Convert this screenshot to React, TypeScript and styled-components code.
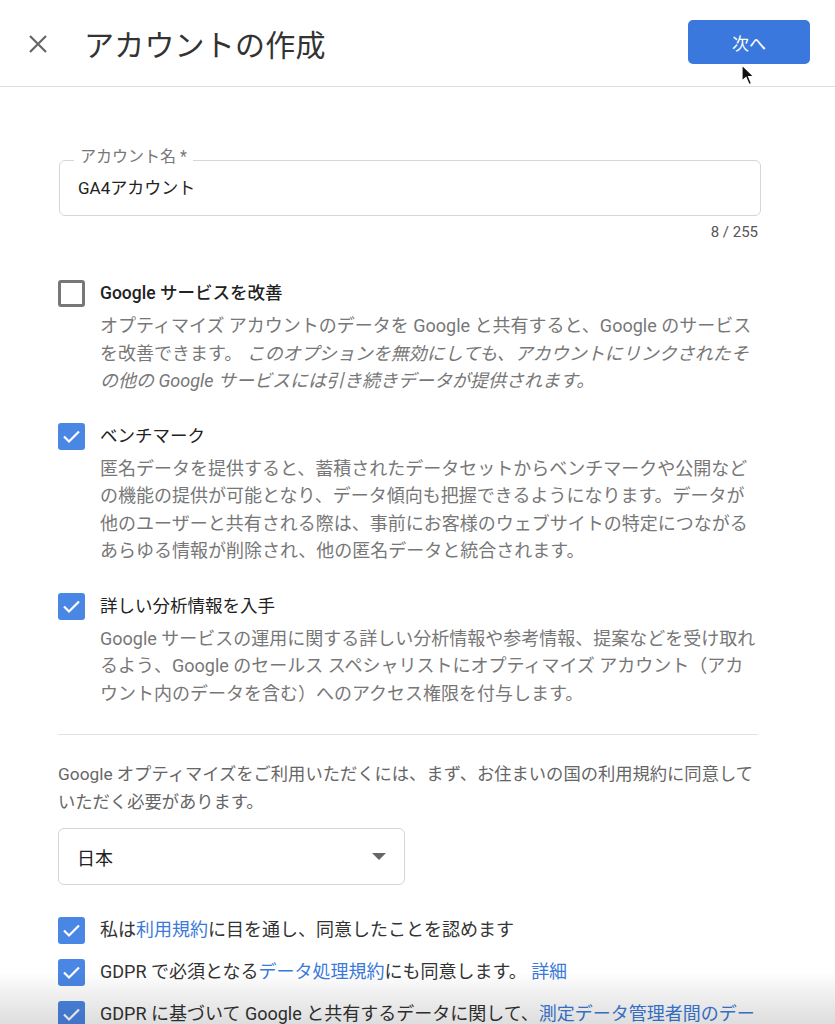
import styled, { createGlobalStyle } from 'styled-components';

const GlobalStyle = createGlobalStyle`
  html, body {
    margin: 0;
    padding: 0;
    background: #ffffff;
  }
  body {
    font-family: Roboto, "Noto Sans CJK JP", "Noto Sans", sans-serif;
    color: #202124;
  }
`;

const Page = styled.div`
  width: 835px;
  min-height: 1024px;
  overflow: hidden;
  position: relative;
`;

const Header = styled.header`
  height: 86px;
  display: flex;
  align-items: center;
  border-bottom: 1px solid #dcdcdc;
  padding: 0 25px 0 27px;
  position: relative;
`;

const CloseButton = styled.button`
  width: 22px;
  height: 22px;
  padding: 0;
  border: none;
  background: none;
  display: flex;
  align-items: center;
  justify-content: center;
  margin-right: 35px;
  margin-top: 1px;
`;

const Title = styled.h1`
  margin: 0;
  font-size: 30px;
  font-weight: 400;
  color: #333333;
  letter-spacing: 0.2px;
  flex: 1;
`;

const NextButton = styled.button`
  width: 122px;
  height: 44px;
  border: none;
  border-radius: 5px;
  background: #3a78dd;
  color: #ffffff;
  font-family: inherit;
  font-size: 17px;
  margin-top: -2px;
`;

const Cursor = styled.svg`
  position: absolute;
  left: 741px;
  top: 64px;
`;

const Content = styled.main`
  margin-left: 58px;
  width: 703px;
  padding-top: 73px;
`;

const Field = styled.div`
  position: relative;
  height: 56px;
  border: 1px solid #d6d6d6;
  border-radius: 6px;
  display: flex;
  align-items: center;
  padding: 0 18px;
  margin-left: 1px;
  box-sizing: border-box;
`;

const FloatLabel = styled.span`
  position: absolute;
  left: 14px;
  top: -16px;
  padding: 0 6px;
  background: #ffffff;
  font-size: 16px;
  line-height: 24px;
  color: #777777;
`;

const FieldValue = styled.span`
  font-size: 17px;
  color: #222222;
  margin-top: -3px;
`;

const Counter = styled.div`
  text-align: right;
  font-size: 15px;
  line-height: 20px;
  color: #555555;
  margin-top: 6px;
  padding-right: 3px;
`;

const OptionList = styled.div`
  display: flex;
  flex-direction: column;
  gap: 27px;
  margin-top: 37px;
`;

const Option = styled.div`
  display: grid;
  grid-template-columns: 27px 1fr;
  column-gap: 15px;
`;

const Box = styled.span<{ $checked: boolean }>`
  width: 27px;
  height: 27px;
  box-sizing: border-box;
  border-radius: 3px;
  display: flex;
  align-items: center;
  justify-content: center;
  margin-top: 1px;
  background: ${({ $checked }) => ($checked ? '#4a86e4' : '#ffffff')};
  border: ${({ $checked }) => ($checked ? 'none' : '3px solid #777777')};
`;

const OptionTitle = styled.div<{ $bold?: boolean }>`
  font-size: 17.5px;
  line-height: 28px;
  color: #222222;
  font-weight: ${({ $bold }) => ($bold ? 500 : 400)};
`;

const OptionText = styled.p`
  grid-column: 2;
  margin: 5px 0 0;
  padding-right: 5px;
  font-size: 18px;
  line-height: 27.5px;
  color: #777777;

  em {
    font-style: italic;
  }
`;

const Divider = styled.hr`
  border: none;
  border-top: 1px solid #e3e3e3;
  margin: 27px 3px 0 0;
`;

const Notice = styled.p`
  margin: 25px 0 0;
  font-size: 17.3px;
  line-height: 28px;
  color: #666666;
`;

const Select = styled.div`
  margin-top: 12px;
  width: 347px;
  height: 57px;
  box-sizing: border-box;
  border: 1px solid #d6d6d6;
  border-radius: 6px;
  display: flex;
  align-items: center;
  justify-content: space-between;
  padding: 0 18px 0 18px;
  font-size: 18px;
  color: #222222;
`;

const Caret = styled.span`
  width: 0;
  height: 0;
  border-left: 7px solid transparent;
  border-right: 7px solid transparent;
  border-top: 7px solid #666666;
`;

const AgreeList = styled.div`
  margin-top: 31px;
  display: flex;
  flex-direction: column;
  gap: 14px;
  padding-bottom: 40px;
`;

const AgreeRow = styled.div`
  display: grid;
  grid-template-columns: 27px 1fr;
  column-gap: 15px;
  font-size: 18px;
  line-height: 28px;
  color: #333333;
`;

const Link = styled.a`
  color: #3b7ad9;
  text-decoration: none;
`;

const BottomShade = styled.div`
  position: fixed;
  left: 0;
  right: 0;
  bottom: 0;
  height: 52px;
  pointer-events: none;
  background: linear-gradient(
    to bottom,
    rgba(0, 0, 0, 0) 0%,
    rgba(0, 0, 0, 0.07) 50%,
    rgba(0, 0, 0, 0.13) 100%
  );
`;

const Check = ({ checked }: { checked: boolean }) => (
  <Box $checked={checked}>
    {checked && (
      <svg width="19" height="15" viewBox="0 0 19 15">
        <path d="M2 7.5 L7 12.5 L17 2.5" fill="none" stroke="#ffffff" strokeWidth="2.2" />
      </svg>
    )}
  </Box>
);

const App = () => {
  return (
    <Page>
      <GlobalStyle />
      <Header>
        <CloseButton aria-label="閉じる">
          <svg width="20" height="20" viewBox="0 0 20 20">
            <path d="M2 2 L18 18 M18 2 L2 18" stroke="#666666" strokeWidth="2.2" fill="none" />
          </svg>
        </CloseButton>
        <Title>アカウントの作成</Title>
        <NextButton>次へ</NextButton>
        <Cursor width="15" height="23" viewBox="0 0 15 23">
          <path
            d="M1 1 L1 17 L5 13.5 L8 20.5 L10.5 19.5 L7.6 12.6 L12.8 12.6 Z"
            fill="#111111"
            stroke="#ffffff"
            strokeWidth="1.2"
          />
        </Cursor>
      </Header>

      <Content>
        <Field>
          <FloatLabel>アカウント名 *</FloatLabel>
          <FieldValue>GA4アカウント</FieldValue>
        </Field>
        <Counter>8 / 255</Counter>

        <OptionList>
          <Option>
            <Check checked={false} />
            <OptionTitle $bold>Google サービスを改善</OptionTitle>
            <OptionText>
              オプティマイズ アカウントのデータを Google と共有すると、Google のサービスを改善できます。{' '}
              <em>
                このオプションを無効にしても、アカウントにリンクされたその他の Google サービスには引き続きデータが提供されます。
              </em>
            </OptionText>
          </Option>
          <Option>
            <Check checked />
            <OptionTitle>ベンチマーク</OptionTitle>
            <OptionText>
              匿名データを提供すると、蓄積されたデータセットからベンチマークや公開などの機能の提供が可能となり、データ傾向も把握できるようになります。データが他のユーザーと共有される際は、事前にお客様のウェブサイトの特定につながるあらゆる情報が削除され、他の匿名データと統合されます。
            </OptionText>
          </Option>
          <Option>
            <Check checked />
            <OptionTitle>詳しい分析情報を入手</OptionTitle>
            <OptionText>
              Google サービスの運用に関する詳しい分析情報や参考情報、提案などを受け取れるよう、Google のセールス スペシャリストにオプティマイズ アカウント（アカウント内のデータを含む）へのアクセス権限を付与します。
            </OptionText>
          </Option>
        </OptionList>

        <Divider />

        <Notice>
          Google オプティマイズをご利用いただくには、まず、お住まいの国の利用規約に同意していただく必要があります。
        </Notice>

        <Select>
          日本
          <Caret />
        </Select>

        <AgreeList>
          <AgreeRow>
            <Check checked />
            <span>
              私は<Link href="#">利用規約</Link>に目を通し、同意したことを認めます
            </span>
          </AgreeRow>
          <AgreeRow>
            <Check checked />
            <span>
              GDPR で必須となる<Link href="#">データ処理規約</Link>にも同意します。 <Link href="#">詳細</Link>
            </span>
          </AgreeRow>
          <AgreeRow>
            <Check checked />
            <span>
              GDPR に基づいて Google と共有するデータに関して、
              <Link href="#">測定データ管理者間のデータ保護条項</Link>に同意します。
            </span>
          </AgreeRow>
        </AgreeList>
      </Content>
      <BottomShade />
    </Page>
  );
};

export default App;
